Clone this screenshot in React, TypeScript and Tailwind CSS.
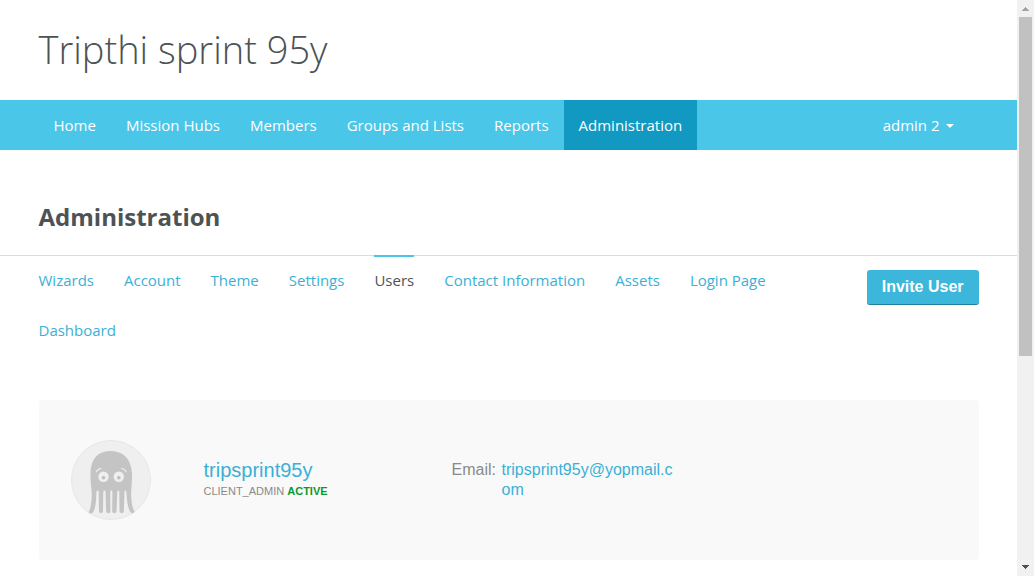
import React from "react";

const mainLinks = ["Home", "Mission Hubs", "Members", "Groups and Lists", "Reports", "Administration"];

const tabs = [
  "Wizards",
  "Account",
  "Theme",
  "Settings",
  "Users",
  "Contact Information",
  "Assets",
  "Login Page",
  "Dashboard",
];

function Container({ children }: { children: React.ReactNode }) {
  return <div className="mx-auto w-full max-w-[940px]">{children}</div>;
}

function Avatar() {
  return (
    <svg viewBox="0 0 80 80" className="size-20 shrink-0" role="img" aria-label="User avatar">
      <circle cx="40" cy="40" r="39.5" fill="#efefef" stroke="#e6e6e6" />
      <path
        fill="#c4c4c4"
        d="M39.500 11C26 11 19.700 20 19.500 34C19.300 46 21.500 51 20.500 60C20 66 19 69 18 71.500C17.500 74 21.500 74 22.500 71.500C25 67 25 60 25.500 51.500C26 50 27.500 50 27.700 51.500L28 71.500C28.500 73.700 31.800 73.500 32 71L32.300 52C32.500 50 34.300 50 34.500 52L35.200 71.500C35.600 73.800 39.200 73.800 39.400 71.500L39.300 52C39.500 50 41.200 50 41.400 52L41.200 71.500C41.500 73.800 45.100 73.800 45.500 71.500L46.300 52C46.500 50 48.100 50 48.300 52L48.500 71C48.700 73.500 52.400 73.700 52.800 71.500L53.500 51.500C53.700 50 55 50 55.300 51.500C56 60 56.500 67 59 71.500C60.500 74 64.200 73.500 63.200 71C62 68.500 60.800 66 60.500 60C59.500 51 61.200 46 61 34C60.500 20 53 11 39.500 11Z"
      />
      <circle cx="32.500" cy="36.800" r="5.200" fill="#efefef" />
      <circle cx="47.800" cy="36.800" r="5.200" fill="#efefef" />
      <circle cx="32.500" cy="37.800" r="1.800" fill="#bdbdbd" />
      <circle cx="47.800" cy="37.800" r="1.800" fill="#bdbdbd" />
      <path d="M25.300 31.800Q26.800 28.800 30 28.500" fill="none" stroke="#efefef" strokeWidth="1.200" strokeLinecap="round" />
      <path d="M50.800 28.500Q53.800 28.800 55 31.800" fill="none" stroke="#efefef" strokeWidth="1.200" strokeLinecap="round" />
    </svg>
  );
}

function ScrollRail() {
  return (
    <div className="flex w-[17px] shrink-0 flex-col bg-[#f1f1f1]" aria-hidden="true">
      <svg viewBox="0 0 17 17" className="h-[17px] w-full shrink-0" shapeRendering="crispEdges">
        <path d="M8 7h1v1h1v1h1v1h1v1H5v-1h1v-1h1v-1h1z" fill="#a3a3a3" />
      </svg>
      <div className="flex-1 px-[2px]">
        <div className="h-5/8 bg-[#c1c1c1]" />
      </div>
      <svg viewBox="0 0 17 17" className="h-[17px] w-full shrink-0" shapeRendering="crispEdges">
        <path d="M5 6h7v1h-1v1h-1v1H9v1H8V9H7V8H6V7H5z" fill="#505050" />
      </svg>
    </div>
  );
}

export default function App() {
  return (
    <div className="flex h-screen overflow-hidden bg-white font-['Open_Sans',sans-serif] text-[15px] text-[#4d5254]">
      <div className="min-w-0 flex-1 overflow-hidden">
        <header>
          <Container>
            <div className="flex h-[100px] items-center pb-0.5">
              <p className="text-[38px] leading-10 font-light">Tripthi sprint 95y</p>
            </div>
          </Container>
          <div className="bg-[#4ac6e9]">
            <Container>
              <nav className="flex justify-between text-white" aria-label="Main">
                <ul className="flex">
                  {mainLinks.map((label) => (
                    <li key={label}>
                      <a
                        href="#"
                        className={
                          label === "Administration"
                            ? "block bg-[#1199c1] px-[15px] leading-[50px]"
                            : "block px-[15px] leading-[50px]"
                        }
                      >
                        {label}
                      </a>
                    </li>
                  ))}
                </ul>
                <button type="button" className="mr-2.5 flex items-center gap-1.5 px-[15px]">
                  admin 2
                  <svg viewBox="0 0 8 4" className="mt-0.5 h-1 w-2" aria-hidden="true">
                    <path d="M0 0h8L4 4z" fill="currentColor" />
                  </svg>
                </button>
              </nav>
            </Container>
          </div>
        </header>

        <main>
          <div className="border-b border-[#dcdcdc] pt-[50px] pb-[22px]">
            <Container>
              <h1 className="text-2xl leading-[33px] font-bold">Administration</h1>
            </Container>
          </div>
          <Container>
            <div className="flex items-start justify-between gap-4">
              <nav aria-label="Administration sections">
                <ul className="-mt-px flex flex-wrap gap-x-[30px]">
                  {tabs.map((label) => (
                    <li key={label}>
                      <a
                        href="#"
                        className={
                          label === "Users"
                            ? "block border-t-2 border-[#4ac6e9] pb-0.5 leading-[46px]"
                            : "block border-t-2 border-transparent pb-0.5 leading-[46px] text-[#3bb0d5]"
                        }
                      >
                        {label}
                      </a>
                    </li>
                  ))}
                </ul>
              </nav>
              <button
                type="button"
                className="mt-3.5 h-[35px] shrink-0 rounded-[3px] border-b border-[#22809c] bg-[#3cb6da] px-[15px] font-['Liberation_Sans',sans-serif] text-base font-bold text-white"
              >
                Invite User
              </button>
            </div>

            <section className="mt-[45px] flex h-40 items-center rounded bg-[#f9f9f9] px-8 font-['Liberation_Sans',sans-serif] text-[#8a8a8a]">
              <Avatar />
              <div className="ml-[53px] w-[248px]">
                <h2 className="text-xl leading-5 text-[#3bb0d5]">
                  <a href="#">tripsprint95y</a>
                </h2>
                <p className="pt-1 pb-0.5 text-[11px] leading-[14px]">
                  CLIENT_ADMIN <strong className="text-[#0a9a2c]">ACTIVE</strong>
                </p>
              </div>
              <dl className="flex text-base leading-5">
                <dt className="w-[50px]">Email:</dt>
                <dd className="w-[175px] break-all text-[#3bb0d5]">
                  <a href="#">tripsprint95y@yopmail.com</a>
                </dd>
              </dl>
            </section>
          </Container>
        </main>
      </div>
      <ScrollRail />
    </div>
  );
}
